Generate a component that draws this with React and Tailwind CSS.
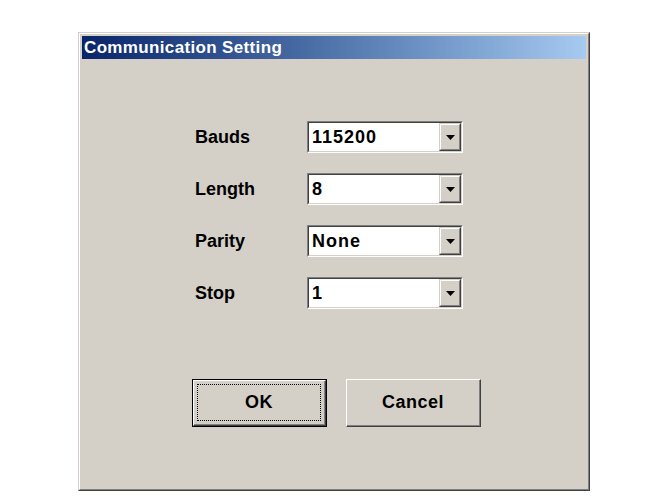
import React, { useState } from 'react'

const font = { fontFamily: '"Liberation Sans", Arial, sans-serif' }

function Combo({ value }) {
  return (
    <div className="w-[156px] h-[32px] border-t border-l border-t-[#808080] border-l-[#808080] border-b border-r border-b-white border-r-white">
      <div className="w-full h-full flex border-t border-l border-t-[#404040] border-l-[#404040] border-b border-r border-b-[#d4d0c8] border-r-[#d4d0c8] bg-white">
        <div className="flex-1 flex items-center pl-[3px] text-[18px] tracking-[1px] font-bold text-black">{value}</div>
        <div className="w-[22px] h-full border-t border-l border-t-[#d4d0c8] border-l-[#d4d0c8] border-b border-r border-b-[#404040] border-r-[#404040]">
          <div className="w-full h-full flex items-center justify-center bg-[#d4d0c8] border-t border-l border-t-white border-l-white border-b border-r border-b-[#808080] border-r-[#808080]">
            <svg width="9" height="5" viewBox="0 0 9 5"><path d="M0 0h9L4.5 5z" fill="#000" /></svg>
          </div>
        </div>
      </div>
    </div>
  )
}

function Button({ label, isDefault }) {
  return (
    <div className={`w-[135px] h-[48px] bg-[#d4d0c8] ${isDefault ? 'border border-black' : ''}`}>
      <div className="w-full h-full border-t border-l border-t-white border-l-white border-b border-r border-b-[#404040] border-r-[#404040]">
        <div className="w-full h-full border-b border-r border-b-[#808080] border-r-[#808080] flex items-center justify-center p-[3px]">
          <div className={`w-full h-full flex items-center justify-center text-[18px] tracking-[0.5px] font-bold text-black ${isDefault ? 'border border-dotted border-black' : ''}`}>
            {label}
          </div>
        </div>
      </div>
    </div>
  )
}

export default function App() {
  const [settings] = useState([
    ['Bauds', '115200'],
    ['Length', '8'],
    ['Parity', 'None'],
    ['Stop', '1'],
  ])

  return (
    <div className="w-[655px] h-[504px] bg-white pt-[32px] pl-[78px]" style={font}>
      <div className="w-[512px] h-[459px] border-t border-l border-t-[#d4d0c8] border-l-[#d4d0c8] border-b border-r border-b-[#404040] border-r-[#404040]">
        <div className="w-full h-full bg-[#d4d0c8] border-t border-l border-t-white border-l-white border-b border-r border-b-[#808080] border-r-[#808080] p-[2px] flex flex-col">
          <div className="h-[23px] flex items-center pl-[2px] text-white font-bold text-[17px] tracking-[0.35px] bg-gradient-to-r from-[#0a246a] to-[#a6caf0]">
            Communication Setting
          </div>

          <div className="flex flex-col gap-[20px] pt-[62px] pl-[113px]">
            {settings.map(([label, value]) => (
              <div key={label} className="flex items-center">
                <div className="w-[112px] text-[18px] font-bold text-black">{label}</div>
                <Combo value={value} />
              </div>
            ))}
          </div>

          <div className="flex gap-[19px] pt-[70px] pl-[110px]">
            <Button label="OK" isDefault />
            <Button label="Cancel" />
          </div>
        </div>
      </div>
    </div>
  )
}
